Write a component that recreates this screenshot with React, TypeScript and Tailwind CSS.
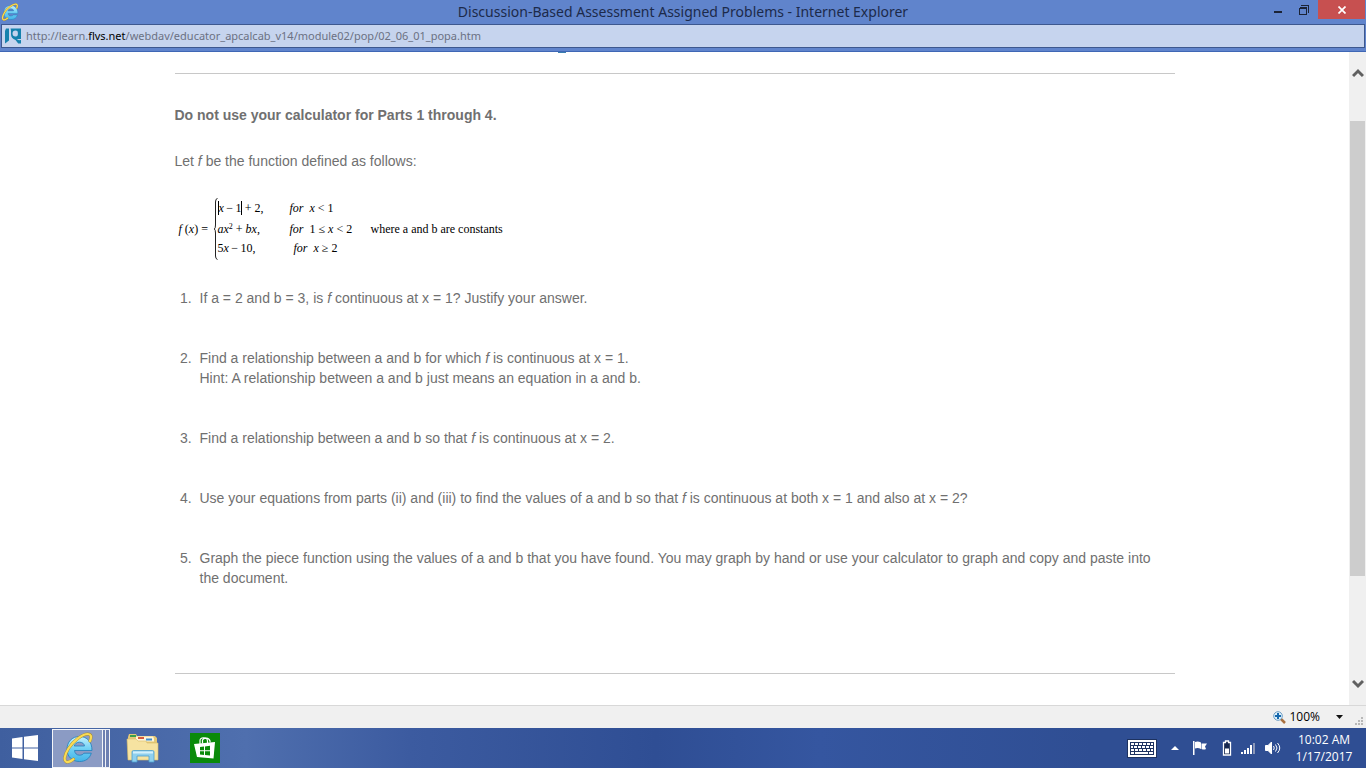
import type { ReactNode } from 'react'

const problems: { id: number; body: ReactNode }[] = [
    { id: 1, body: <>If a = 2 and b = 3, is <i>f</i> continuous at x = 1? Justify your answer.</> },
    {
        id: 2,
        body: (
            <>
                Find a relationship between a and b for which <i>f</i> is continuous at x = 1.
                <br />
                Hint: A relationship between a and b just means an equation in a and b.
            </>
        ),
    },
    { id: 3, body: <>Find a relationship between a and b so that <i>f</i> is continuous at x = 2.</> },
    {
        id: 4,
        body: (
            <>
                Use your equations from parts (ii) and (iii) to find the values of a and b so that <i>f</i> is
                continuous at both x = 1 and also at x = 2?
            </>
        ),
    },
    {
        id: 5,
        body: (
            <>
                Graph the piece function using the values of a and b that you have found. You may graph by hand or
                use your calculator to graph and copy and paste into the document.
            </>
        ),
    },
]

function ExplorerLogo({ className, id }: { className: string; id: string }) {
    return (
        <svg viewBox="0 0 32 32" className={className} aria-hidden="true">
            <defs>
                <linearGradient id={id} x1="0" y1="0" x2="0" y2="1">
                    <stop offset="0" stopColor="#c4f1fd" />
                    <stop offset="0.5" stopColor="#6fd0f4" />
                    <stop offset="1" stopColor="#43b2e8" />
                </linearGradient>
            </defs>
            <path
                d="M30 18.500H12.500c.3 3 2.300 4.700 5 4.700 2 0 3.500-.7 4.400-2h7.400c-1.700 5.500-6 8.300-11.800 8.300C10 29.500 5 24.500 5 17.300 5 10 10 4.500 17.500 4.500 25.300 4.500 30 10 30 18.500zM22.500 14c-.3-2.300-2.200-3.800-5-3.800s-4.700 1.500-5.200 3.800z"
                fill={`url(#${id})`}
                stroke="#1f7fbc"
                strokeWidth="0.800"
            />
            <path
                d="M28 9C30 4.500 29 2 25.800 2 20.800 2 11.500 8.500 6.500 16.500c-4 6.500-5 12-2.300 13.300 1.800.8 4.600-.5 7.300-2.700"
                fill="none"
                stroke="#a88c2c"
                strokeWidth="3"
                strokeLinecap="round"
            />
            <path
                d="M28 9C30 4.500 29 2 25.800 2 20.800 2 11.500 8.500 6.500 16.500c-4 6.500-5 12-2.300 13.300 1.800.8 4.600-.5 7.300-2.700"
                fill="none"
                stroke="#fadb55"
                strokeWidth="2.200"
                strokeLinecap="round"
            />
        </svg>
    )
}

function TitleBar() {
    return (
        <header className="border-b border-[#3f67b5] bg-[#6084cc] pb-[3px]">
            <div className="grid h-6 grid-cols-[1fr_auto_1fr] items-center">
                <ExplorerLogo id="ie-small" className="ml-px h-[18px] w-[18px]" />
                <h1 className="text-sm text-[#1c2a4a]">
                    Discussion-Based Assessment Assigned Problems - Internet Explorer
                </h1>
                <div className="mr-px flex h-full items-start justify-end">
                    <button type="button" aria-label="Minimize" className="flex h-[19px] w-[26px] justify-center pt-[11px]">
                        <span className="h-[2px] w-2 bg-[#1b2336]" />
                    </button>
                    <button type="button" aria-label="Restore" className="flex h-[19px] w-[27px] items-center justify-start pl-2">
                        <svg viewBox="0 0 10 10" className="h-[10px] w-[10px]" fill="none" stroke="#1b2336" shapeRendering="crispEdges">
                            <path d="M2 .5h7.500V8" />
                            <path d="M.5 3.500h7v6h-7zM.5 2.500h7" />
                        </svg>
                    </button>
                    <button type="button" aria-label="Close" className="flex h-[19px] w-[47px] items-center justify-center bg-[#c75050]">
                        <svg viewBox="0 0 8 8" className="h-2 w-2" fill="none" stroke="#fff" strokeWidth="1.700">
                            <path d="M.5.5l7 7M7.500.5l-7 7" />
                        </svg>
                    </button>
                </div>
            </div>
            <div className="mx-px flex h-6 items-center border border-[#3d588f] bg-[#c6d4ee]">
                <svg viewBox="0 0 16 16" className="ml-[3px] h-4 w-4" aria-hidden="true">
                    <path d="M1 .5h3v12L0 15.500V3z" fill="#1581ad" />
                    <path d="M5.500.5H16v15h-2.800L10.500 12C7.500 11 6 9 6 6.500c0-2 .3-4-.5-6z" fill="#1581ad" />
                    <path d="M10.500 2.500a3 3 0 0 0 0 6c.8 0 1.800-.5 2.200-1 .3-1.500.3-3-.2-4.200-.5-.5-1.200-.8-2-.8zM11.500 11h4.500v1l-2 .3z" fill="#c6d4ee" />
                </svg>
                <p className="ml-[5px] text-[11px] text-[#6b7183]">
                    http://learn.<span className="text-black">flvs.net</span>/webdav/educator_apcalcab_v14/module02/pop/02_06_01_popa.htm
                </p>
            </div>
        </header>
    )
}

function PiecewiseFunction() {
    return (
        <div className="mt-[26px] ml-1 flex h-16 items-center font-['Liberation_Serif',serif] text-xs text-black">
            <span className="w-[35px] whitespace-nowrap"><i>f</i> (<i>x</i>) =</span>
            <svg viewBox="0 0 4 62" className="h-[62px] w-1" fill="none" stroke="#222" aria-hidden="true">
                <path d="M3.500.5Q1.500.5 1.500 4V27Q1.500 30.500.3 31 1.500 31.500 1.500 35V58Q1.500 61 3.500 61.500" />
            </svg>
            <div className="grid grid-cols-[72px_81px] grid-rows-[22px_20px_18px] items-center self-start leading-4">
                <span><span className="border-x border-black"><i>x</i>&thinsp;−&thinsp;1</span>&thinsp;+ 2,</span>
                <span><i>for</i> &nbsp;<i>x</i> &lt; 1</span>
                <span><i>ax</i><sup className="text-[8px] leading-none">2</sup> + <i>bx</i>,</span>
                <span><i>for</i> &nbsp;1 ≤ <i>x</i> &lt; 2</span>
                <span>5<i>x</i>&thinsp;−&thinsp;10,</span>
                <span className="pl-1"><i>for</i> &nbsp;<i>x</i> ≥ 2</span>
            </div>
            <span>where a and b are constants</span>
        </div>
    )
}

function ScrollBar() {
    return (
        <div className="flex w-[17px] shrink-0 flex-col items-center bg-[#f0f0f0] text-[#606060]">
            <button type="button" aria-label="Scroll up" className="flex h-[69px] w-full items-start justify-center pt-4">
                <svg viewBox="0 0 12 10" className="h-[10px] w-3" fill="none" stroke="currentColor" strokeWidth="3">
                    <path d="M1 8l5-5 5 5" />
                </svg>
            </button>
            <div className="w-[15px] flex-[455] bg-[#cdcdcd]" />
            <div className="flex flex-[129] items-end">
                <button type="button" aria-label="Scroll down" className="pb-4">
                    <svg viewBox="0 0 12 10" className="block h-[10px] w-3" fill="none" stroke="currentColor" strokeWidth="3">
                        <path d="M1 2l5 5 5-5" />
                    </svg>
                </button>
            </div>
        </div>
    )
}

function StatusBar() {
    return (
        <div className="relative flex h-[23px] items-center justify-end border-t border-[#d8d8d8] bg-[#f0f0f0] pr-[23px] font-['Open_Sans',sans-serif] text-xs text-black">
            <button type="button" className="flex items-center">
                <svg viewBox="0 0 13 13" className="h-[13px] w-[13px]" fill="none" aria-hidden="true">
                    <path d="M8 8l4 4" stroke="#a9703f" strokeWidth="2.500" />
                    <circle cx="5" cy="5" r="4.300" fill="#dff1fb" stroke="#6c9cc4" />
                    <path d="M5 2v6M2 5h6" stroke="#1769ae" strokeWidth="2" />
                </svg>
                <span className="ml-[3px]">100%</span>
                <svg viewBox="0 0 7 4" className="ml-4 h-1 w-[7px]" aria-hidden="true">
                    <path d="M0 0h7L3.500 4z" fill="#111" />
                </svg>
            </button>
            <svg viewBox="0 0 9 9" className="absolute right-[2px] bottom-[2px] h-[9px] w-[9px]" fill="#b8b8b8" aria-hidden="true">
                <path d="M6 0h2v2H6zM3 3h2v2H3zM6 3h2v2H6zM0 6h2v2H0zM3 6h2v2H3zM6 6h2v2H6z" />
            </svg>
        </div>
    )
}

function Taskbar() {
    return (
        <footer className="flex h-10 items-center bg-[linear-gradient(to_right,#3f5f9f,#4f6fae_18%,#3c5ba0_30%,#2f4e94_48%,#3556a0_60%,#2f4e93_80%,#2f4e93)] text-white">
            <button type="button" aria-label="Start" className="ml-3">
                <svg viewBox="0 0 26 26" className="block h-[26px] w-[26px]" fill="#fff">
                    <path d="M0 3.500L10.500 2v10.500H0zM12 1.800L26 0v12.500H12zM0 13.500h10.500V24L0 22.500zM12 13.500h14V26l-14-1.800z" />
                </svg>
            </button>
            <div className="ml-[14px] flex h-[39px]">
                <button type="button" aria-label="Internet Explorer" className="flex w-[51px] items-center justify-center border border-white/90 bg-[#8b9bc4]">
                    <ExplorerLogo id="ie-large" className="h-8 w-8" />
                </button>
                <span className="w-[3px] border-y border-r border-white/90 bg-[#6d80b2]" />
                <span className="w-1 border-y border-r border-white/90 bg-[#6d80b2]" />
            </div>
            <button type="button" aria-label="File Explorer" className="ml-4">
                <svg viewBox="0 0 34 30" className="block h-[30px] w-[34px]">
                    <path d="M2 4l1-3h7l1 2h18l2 2v22H2z" fill="#e3c877" />
                    <path d="M4 2h6v2H4z" fill="#3aa04b" />
                    <path d="M10 3.500h17l1 2v3H10z" fill="#fff6d8" />
                    <path d="M12 4h6v2h-6z" fill="#d65a3c" />
                    <path d="M20 5.500h6v2h-6z" fill="#3f8fd0" />
                    <path d="M1 6h9l2 2h8l1 2h11v17H2z" fill="#f6e3a1" stroke="#d9bd68" strokeWidth="0.600" />
                    <path d="M6 29V19q0-1.500 1.500-1.500h19q1.500 0 1.500 1.500v10h-5v-6H11v6z" fill="#8fd0ee" stroke="#4d9fce" strokeWidth="0.800" />
                    <path d="M7 18.500h20v2H7z" fill="#d4f1fc" />
                </svg>
            </button>
            <button type="button" aria-label="Store" className="ml-[30px] flex h-[30px] w-[30px] items-center justify-center bg-[#0a8a0a]">
                <svg viewBox="0 0 24 24" className="h-6 w-6">
                    <path d="M7 8V4.500C7 1.500 14 0 14.500 5v2M9.500 7.500V4c1-2.500 6.500-3 7.500 1v1.500" fill="none" stroke="#fff" strokeWidth="1.200" />
                    <path d="M1 8l21-2-1.500 16.500L4 21z" fill="#fff" />
                    <path d="M7 11l4-.5v3.700H7zM12 10.400l5-.6v4.400h-5zM7 15.200h4v3.700l-4-.5zM12 15.200h5v4.400l-5-.6z" fill="#0a8a0a" />
                </svg>
            </button>

            <div className="ml-auto flex items-center">
                <button type="button" aria-label="Touch keyboard">
                    <svg viewBox="0 0 30 19" className="block h-[19px] w-[30px]" shapeRendering="crispEdges">
                        <path d="M0 0h30v19H0z" fill="#1d3260" />
                        <path d="M1 1h28v17H1z" fill="#fff" />
                        <path d="M3 3h24v13H3z" fill="#1d3260" />
                        <path d="M4 4h3v2H4zM8 4h3v2H8zM12 4h3v2h-3zM16 4h3v2h-3zM20 4h3v2h-3zM24 4h2v2h-2zM4 7h2v2H4zM7 7h3v2H7zM11 7h3v2h-3zM15 7h3v2h-3zM19 7h3v2h-3zM23 7h3v2h-3zM4 10h3v2H4zM8 10h3v2H8zM12 10h3v2h-3zM16 10h3v2h-3zM20 10h3v2h-3zM24 10h2v2h-2zM4 13h3v2H4zM8 13h13v2H8zM22 13h4v2h-4z" fill="#fff" />
                    </svg>
                </button>
                <button type="button" aria-label="Show hidden icons" className="ml-[14px]">
                    <svg viewBox="0 0 8 4" className="block h-1 w-2" fill="#fff"><path d="M0 4h8L4 0z" /></svg>
                </button>
                <button type="button" aria-label="Action Center" className="ml-[13px]">
                    <svg viewBox="0 0 16 16" className="block h-4 w-4" fill="#fff">
                        <path d="M1 1h1.500v14H1zM3 2q3-1 6 .5V9Q6 7.500 3 8.500zM9.500 3.500h5.500l-2 3 1 2.500q-2 1-4.500 0z" />
                    </svg>
                </button>
                <button type="button" aria-label="Battery" className="ml-[14px]">
                    <svg viewBox="0 0 10 16" className="block h-4 w-[10px]">
                        <path d="M3.500 1h3v1.500h2V15h-7V2.500h2z" fill="#17284f" stroke="#fff" strokeWidth="1.300" />
                        <path d="M3 8.500h4v5H3z" fill="#fff" />
                    </svg>
                </button>
                <button type="button" aria-label="Network" className="ml-[9px]">
                    <svg viewBox="0 0 15 13" className="block h-[13px] w-[15px]" fill="#fff">
                        <path d="M0 10h2v2H0zM3 8h2v4H3zM6 6h2v6H6zM9 3h2v9H9z" />
                        <path d="M12 1h2v11h-2z" fill="#8b97b8" />
                    </svg>
                </button>
                <button type="button" aria-label="Volume" className="ml-[9px]">
                    <svg viewBox="0 0 16 14" className="block h-[14px] w-4" fill="none" stroke="#fff">
                        <path d="M.5 4.500h2.500L6.500 1v12L3 9.500H.5z" fill="#fff" />
                        <path d="M8.500 5q1.500 2 0 4M10.500 3.500q3 3.500 0 7M12.500 2q4.500 5 0 10" />
                    </svg>
                </button>
                <div className="mr-3 ml-[13px] w-[60px] text-center font-['Open_Sans',sans-serif] text-xs leading-[17px] whitespace-nowrap">
                    <div>10:02 AM</div>
                    <div>1/17/2017</div>
                </div>
            </div>
        </footer>
    )
}

export default function App() {
    return (
        <div className="flex h-screen flex-col bg-white font-['Noto_Sans','Open_Sans',sans-serif]">
            <TitleBar />
            <div className="flex min-h-0 flex-1">
                <main className="relative min-w-0 flex-1 overflow-hidden">
                    <div className="mx-auto max-w-[1000px] pt-[21px] font-['Liberation_Sans',Arial,sans-serif] text-sm leading-5 text-[#707070]">
                        {/* bottom edge of the scrolled-off page heading */}
                        <span className="absolute top-0 left-[558px] h-px w-2 bg-[#3c7fb0]" />
                        <hr className="border-[#c8c8c8]" />
                        <p className="mt-[31px] font-bold">Do not use your calculator for Parts 1 through 4.</p>
                        <p className="mt-[26px]">Let <i>f</i> be the function defined as follows:</p>
                        <PiecewiseFunction />
                        <ol className="mt-[27px] list-decimal space-y-10 pr-3 pl-[21px]">
                            {problems.map((problem) => (
                                <li key={problem.id} className="pl-1">{problem.body}</li>
                            ))}
                        </ol>
                        <hr className="mt-[85px] border-[#c8c8c8]" />
                    </div>
                </main>
                <ScrollBar />
            </div>
            <StatusBar />
            <Taskbar />
        </div>
    )
}
